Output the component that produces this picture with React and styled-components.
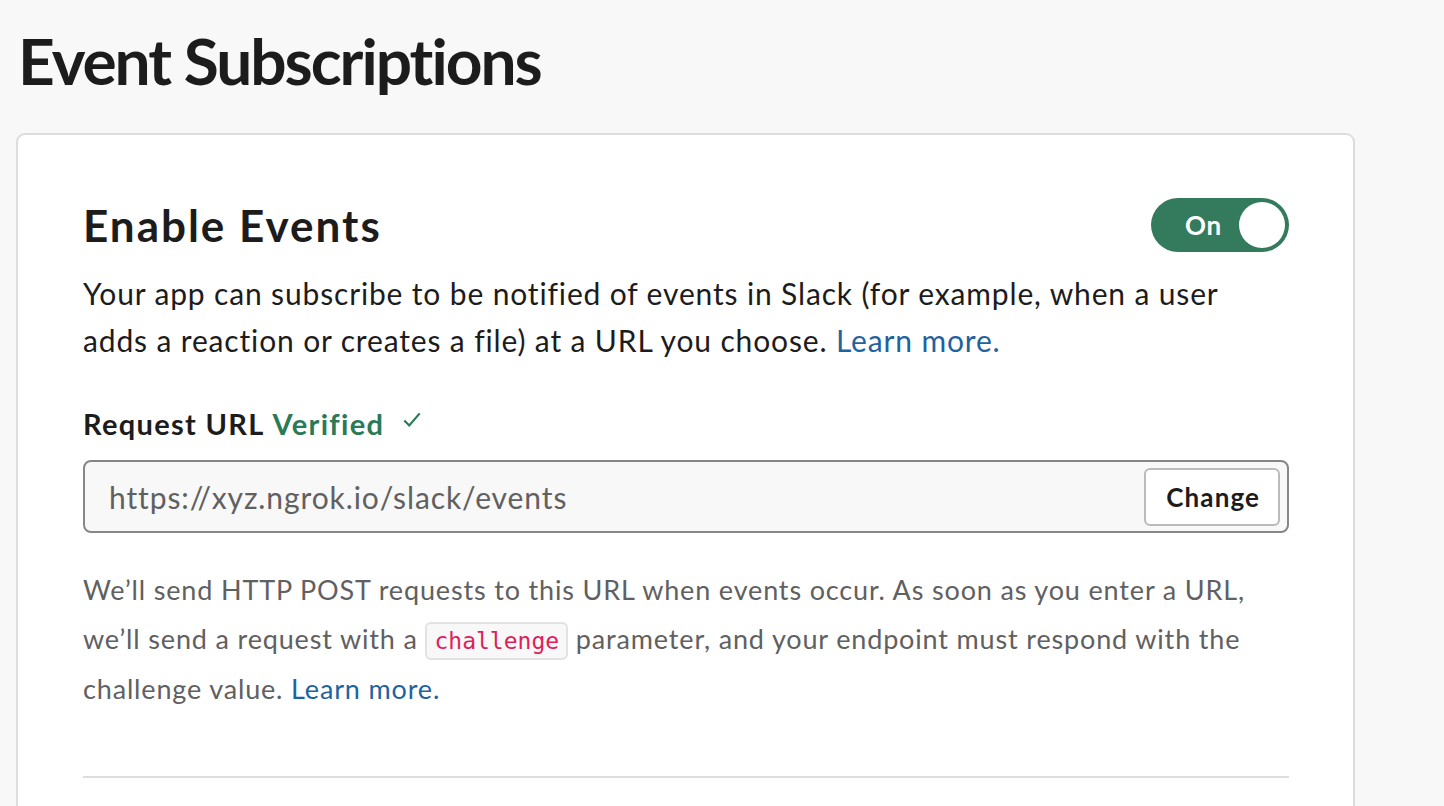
import React from 'react';
import styled, { createGlobalStyle } from 'styled-components';

const GlobalStyle = createGlobalStyle`
  body {
    margin: 0;
    background: #f8f8f8;
    font-family: Lato, "Noto Sans", sans-serif;
    color: #1d1c1d;
  }
`

function App() {
  return (
    <Page>
      <GlobalStyle />
      <Title>Event Subscriptions</Title>
      <Card>
        <HeaderRow>
          <Heading>Enable Events</Heading>
          <Toggle>
            <ToggleLabel>On</ToggleLabel>
            <Knob />
          </Toggle>
        </HeaderRow>
        <Intro>
          Your app can subscribe to be notified of events in Slack (for example, when a user<br />
          adds a reaction or creates a file) at a URL you choose. <Link>Learn more.</Link>
        </Intro>
        <Label>
          Request URL <Verified>Verified</Verified>
          <Check viewBox="0 0 20 20">
            <path d="M3 10.5 L7.5 15 L17 4" />
          </Check>
        </Label>
        <InputBox>
          <InputText>https://xyz.ngrok.io/slack/events</InputText>
          <Button>Change</Button>
        </InputBox>
        <Help>
          We’ll send HTTP POST requests to this URL when events occur. As soon as you enter a URL,<br />
          we’ll send a request with a <Code>challenge</Code> parameter, and your endpoint must respond with the<br />
          challenge value. <Link>Learn more.</Link>
        </Help>
        <Divider />
      </Card>
    </Page>
  )
}

const Page = styled.div`
  padding: 29px 0 0 16px;
  width: 1339px;
  height: 777px;
  overflow: hidden;
`

const Title = styled.h1`
  margin: 0 0 40px 2px;
  font-size: 64px;
  line-height: 64px;
  font-weight: 700;
  letter-spacing: -2px;
`

const Card = styled.div`
  background: #fff;
  border: 2px solid #dddddd;
  border-bottom: none;
  border-radius: 9px 9px 0 0;
  padding: 63px 64px 40px 65px;
  height: 720px;
  box-sizing: border-box;
`

const HeaderRow = styled.div`
  display: flex;
  justify-content: space-between;
  align-items: center;
`

const Heading = styled.h2`
  margin: 0;
  font-size: 44px;
  line-height: 54px;
  font-weight: 700;
  letter-spacing: 2px;
`

const Toggle = styled.div`
  display: flex;
  align-items: center;
  justify-content: space-between;
  box-sizing: border-box;
  width: 138px;
  height: 54px;
  padding: 0 4px 0 34px;
  border-radius: 27px;
  background: #347a5c;
`

const ToggleLabel = styled.span`
  color: #fff;
  font-size: 26px;
  font-weight: 700;
  letter-spacing: 0.8px;
`

const Knob = styled.span`
  width: 46px;
  height: 46px;
  border-radius: 50%;
  background: #fff;
`

const Intro = styled.p`
  margin: 18px 0 0;
  font-size: 30px;
  line-height: 47px;
  letter-spacing: 0.85px;
`

const Link = styled.a`
  color: #1d63a0;
`

const Label = styled.div`
  margin-top: 40px;
  display: flex;
  align-items: center;
  font-size: 29px;
  font-weight: 700;
  line-height: 40px;
  letter-spacing: 1.3px;
`

const Verified = styled.span`
  color: #2b7a57;
  margin-left: 8px;
`

const Check = styled.svg`
  width: 22px;
  height: 22px;
  margin: -8px 0 0 17px;
  fill: none;
  stroke: #2b7a57;
  stroke-width: 2;
`

const InputBox = styled.div`
  margin-top: 16px;
  display: flex;
  align-items: center;
  justify-content: space-between;
  height: 73px;
  box-sizing: border-box;
  border: 2px solid #868686;
  border-radius: 8px;
  background: #f8f8f8;
  padding: 0 7px 0 24px;
`

const InputText = styled.span`
  font-size: 30px;
  color: #616061;
  letter-spacing: 0.9px;
`

const Button = styled.button`
  height: 58px;
  padding: 0 18px 0 20px;
  border: 2px solid #bbbbbb;
  border-radius: 6px;
  background: #fff;
  font-family: Lato, sans-serif;
  font-size: 26px;
  font-weight: 700;
  letter-spacing: 1.1px;
  color: #1d1c1d;
`

const Help = styled.p`
  margin: 33px 0 0;
  font-size: 27px;
  line-height: 48.5px;
  letter-spacing: 0.84px;
  color: #616061;
`

const Code = styled.code`
  font-family: "DejaVu Sans Mono", monospace;
  font-size: 23px;
  letter-spacing: 0;
  color: #e01e5a;
  background: #f8f8f8;
  border: 2px solid #e2e2e2;
  border-radius: 6px;
  padding: 4px 7px;
`

const Divider = styled.hr`
  margin: 62px 0 0;
  border: none;
  border-top: 2px solid #dddddd;
`

export default App;
